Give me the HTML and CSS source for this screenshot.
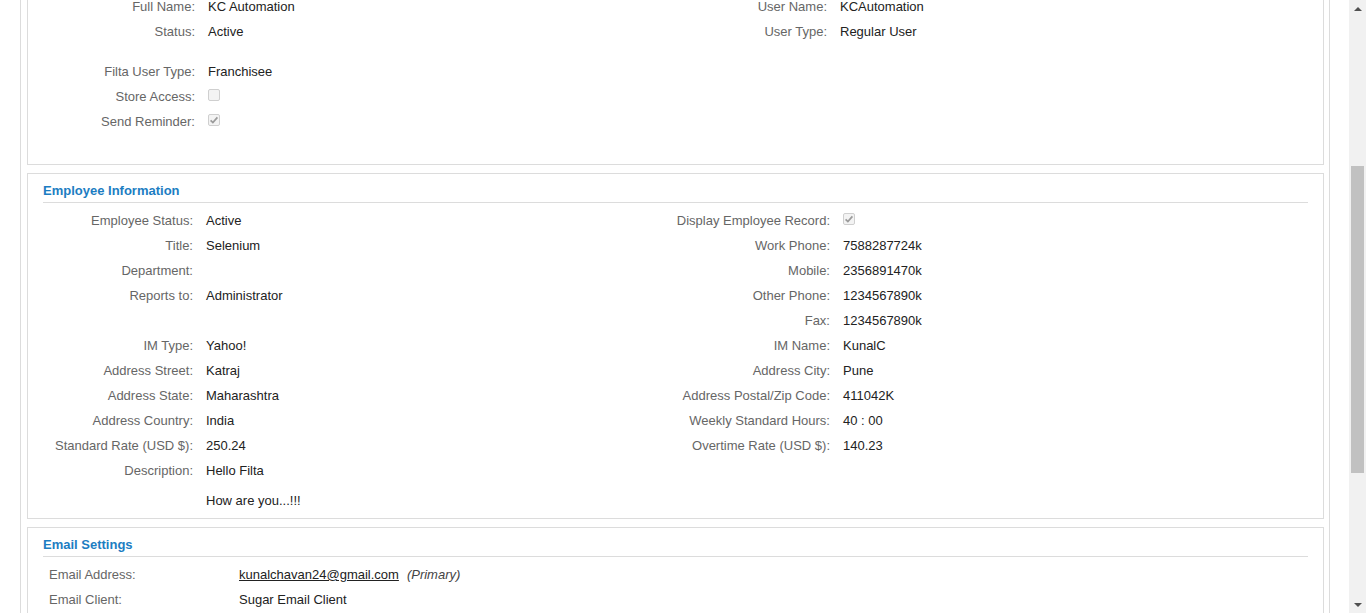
FILE: index.html
```html
<!DOCTYPE html>
<html>
<head>
<meta charset="utf-8">
<link rel="stylesheet" href="styles.css">
</head>
<body>
<div class="app">
  <div class="viewport">
    <div class="frame">
      <section class="panel panel-user">
        <div class="grid grid-user">
          <div class="lbl">Full Name:</div><div class="val">KC Automation</div>
          <div class="lbl">User Name:</div><div class="val">KCAutomation</div>
          <div class="lbl">Status:</div><div class="val">Active</div>
          <div class="lbl">User Type:</div><div class="val">Regular User</div>
          <div class="spacer"></div>
          <div class="lbl">Filta User Type:</div><div class="val">Franchisee</div>
          <div class="lbl"></div><div class="val"></div>
          <div class="lbl">Store Access:</div><div class="val"><span class="chk"></span></div>
          <div class="lbl"></div><div class="val"></div>
          <div class="lbl">Send Reminder:</div><div class="val"><span class="chk"><svg viewBox="0 0 12 12" width="12" height="12"><path d="M2.6 6.3 L4.9 8.6 L9.4 3.4" fill="none" stroke="#9a9a9a" stroke-width="1.7"/></svg></span></div>
          <div class="lbl"></div><div class="val"></div>
        </div>
      </section>

      <section class="panel">
        <h2 class="panel-title">Employee Information</h2>
        <div class="grid grid-emp">
          <div class="lbl">Employee Status:</div><div class="val">Active</div>
          <div class="lbl">Display Employee Record:</div><div class="val"><span class="chk"><svg viewBox="0 0 12 12" width="12" height="12"><path d="M2.6 6.3 L4.9 8.6 L9.4 3.4" fill="none" stroke="#9a9a9a" stroke-width="1.7"/></svg></span></div>
          <div class="lbl">Title:</div><div class="val">Selenium</div>
          <div class="lbl">Work Phone:</div><div class="val">7588287724k</div>
          <div class="lbl">Department:</div><div class="val"></div>
          <div class="lbl">Mobile:</div><div class="val">2356891470k</div>
          <div class="lbl">Reports to:</div><div class="val">Administrator</div>
          <div class="lbl">Other Phone:</div><div class="val">1234567890k</div>
          <div class="lbl"></div><div class="val"></div>
          <div class="lbl">Fax:</div><div class="val">1234567890k</div>
          <div class="lbl">IM Type:</div><div class="val">Yahoo!</div>
          <div class="lbl">IM Name:</div><div class="val">KunalC</div>
          <div class="lbl">Address Street:</div><div class="val">Katraj</div>
          <div class="lbl">Address City:</div><div class="val">Pune</div>
          <div class="lbl">Address State:</div><div class="val">Maharashtra</div>
          <div class="lbl">Address Postal/Zip Code:</div><div class="val">411042K</div>
          <div class="lbl">Address Country:</div><div class="val">India</div>
          <div class="lbl">Weekly Standard Hours:</div><div class="val">40 : 00</div>
          <div class="lbl">Standard Rate (USD $):</div><div class="val">250.24</div>
          <div class="lbl">Overtime Rate (USD $):</div><div class="val">140.23</div>
          <div class="lbl">Description:</div><div class="val">Hello Filta<br><br>How are you...!!!</div>
          <div class="lbl"></div><div class="val"></div>
        </div>
      </section>

      <section class="panel panel-email">
        <h2 class="panel-title">Email Settings</h2>
        <div class="grid grid-email">
          <div class="lbl-left">Email Address:</div><div class="val"><a class="mail" href="#">kunalchavan24@gmail.com</a><em class="primary">(Primary)</em></div>
          <div class="lbl-left">Email Client:</div><div class="val">Sugar Email Client</div>
          <div class="lbl-left">&nbsp;</div><div class="val"></div>
        </div>
      </section>
    </div>
  </div>
  <div class="scrollbar">
    <div class="sb-btn"><span class="arrow-up"></span></div>
    <div class="sb-track"><div class="sb-thumb"></div></div>
    <div class="sb-btn"><span class="arrow-down"></span></div>
  </div>
</div>
</body>
</html>
```

FILE: styles.css
```css
html, body {
  margin: 0;
  padding: 0;
  height: 100%;
  overflow: hidden;
  background: #fff;
}
body {
  font-family: "Liberation Sans", Arial, sans-serif;
  font-size: 13px;
  color: #222;
}
.app {
  display: flex;
  height: 613px;
}
.viewport {
  flex: 1;
  overflow: hidden;
}
.frame {
  margin-left: 20px;
  width: 1308px;
  min-height: 700px;
  border-left: 1px solid #dcdcdc;
  border-right: 1px solid #dcdcdc;
}
.panel {
  margin: 0 5px 8px 6px;
  border: 1px solid #dcdcdc;
  padding: 0 15px 5px 15px;
}
.panel-user {
  margin-top: -7px;
  padding-bottom: 30px;
}
.panel-title {
  margin: 0;
  padding: 9px 0 4px 0;
  line-height: 15px;
  font-size: 13px;
  font-weight: bold;
  color: #1c7dc2;
  border-bottom: 1px solid #dcdcdc;
  margin-bottom: 5px;
}
.grid {
  display: grid;
}
.grid-user {
  grid-template-columns: 165px 400px 232px 1fr;
}
.grid-emp {
  grid-template-columns: 163px 400px 237px 1fr;
}
.grid-email {
  grid-template-columns: 196px 1fr;
}
.lbl, .val, .lbl-left {
  padding: 5px 0;
  line-height: 15px;
  min-height: 15px;
}
.lbl {
  color: #666;
  text-align: right;
  padding-right: 13px;
  white-space: nowrap;
}
.lbl-left {
  color: #666;
  padding-left: 6px;
}
.val {
  color: #222;
}
.spacer {
  grid-column: 1 / -1;
  height: 15px;
}
.chk {
  display: block;
  width: 12px;
  height: 12px;
  box-sizing: border-box;
  border: 1px solid #cfcfcf;
  border-radius: 2px;
  background: #f3f3f3;
  position: relative;
}
.chk svg {
  position: absolute;
  left: -1px;
  top: -1px;
}
.mail {
  color: #222;
  text-decoration: underline;
}
.primary {
  color: #444;
  margin-left: 8px;
}
.scrollbar {
  width: 17px;
  background: #f1f1f1;
  display: flex;
  flex-direction: column;
}
.sb-btn {
  height: 17px;
  display: flex;
  align-items: center;
  justify-content: center;
}
.arrow-up {
  width: 0;
  height: 0;
  border-left: 4px solid transparent;
  border-right: 4px solid transparent;
  border-bottom: 4px solid #505050;
}
.arrow-down {
  width: 0;
  height: 0;
  border-left: 4px solid transparent;
  border-right: 4px solid transparent;
  border-top: 4px solid #505050;
}
.sb-track {
  flex: 1;
}
.sb-thumb {
  margin: 149px 2px 0 2px;
  height: 307px;
  background: #c1c1c1;
}
```
